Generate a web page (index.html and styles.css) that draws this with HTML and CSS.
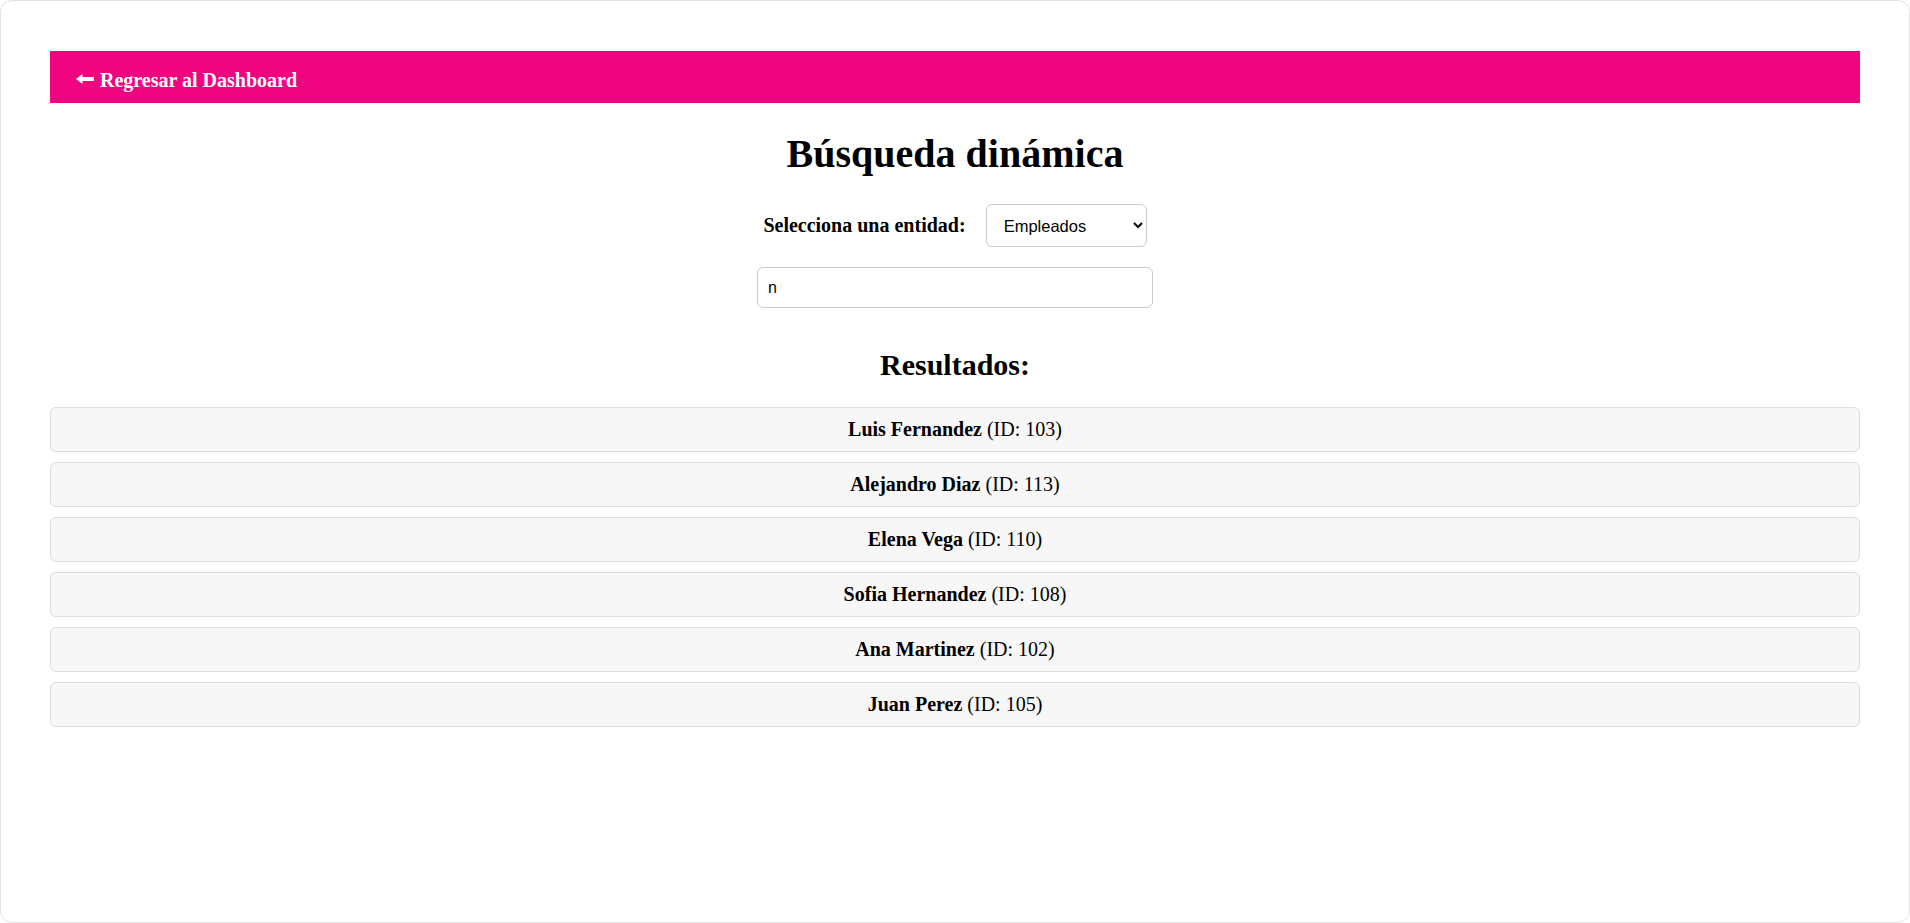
FILE: index.html
```html
<!DOCTYPE html>
<html lang="es">
<head>
<meta charset="utf-8">
<title>Búsqueda dinámica</title>
<link rel="stylesheet" href="styles.css">
</head>
<body>
<div class="page">
  <nav class="topbar">
    <a class="back-link" href="#">
      <svg class="back-icon" width="18" height="10" viewBox="0 0 18 10" aria-hidden="true">
        <polygon points="0,5 6.5,0 6.5,10" fill="#fff"/>
        <rect x="6" y="3" width="12" height="4" fill="#fff"/>
      </svg>
      Regresar al Dashboard
    </a>
  </nav>

  <h1 class="title">Búsqueda dinámica</h1>

  <div class="entity-row">
    <label class="entity-label" for="entity">Selecciona una entidad:</label>
    <select class="entity-select" id="entity">
      <option>Empleados</option>
    </select>
  </div>

  <div class="search-row">
    <input class="search-input" type="text" value="n">
  </div>

  <h2 class="results-title">Resultados:</h2>

  <ul class="results">
    <li class="result"><strong>Luis Fernandez</strong> (ID: 103)</li>
    <li class="result"><strong>Alejandro Diaz</strong> (ID: 113)</li>
    <li class="result"><strong>Elena Vega</strong> (ID: 110)</li>
    <li class="result"><strong>Sofia Hernandez</strong> (ID: 108)</li>
    <li class="result"><strong>Ana Martinez</strong> (ID: 102)</li>
    <li class="result"><strong>Juan Perez</strong> (ID: 105)</li>
  </ul>
</div>
</body>
</html>
```
FILE: styles.css
```css
* {
  box-sizing: border-box;
}

html, body {
  margin: 0;
  padding: 0;
  background: #ffffff;
}

body {
  font-family: "Liberation Serif", "Times New Roman", serif;
  font-size: 20px;
  color: #000;
}

.page {
  min-height: 100vh;
  border: 1px solid #e2e2e2;
  border-radius: 12px;
  padding: 50px 49px 40px;
  background: #fff;
}

.topbar {
  background: #f0047f;
  height: 52px;
  padding: 15px 26px 14px;
}

.back-link {
  color: #fff;
  font-weight: bold;
  text-decoration: none;
  display: inline-flex;
  align-items: center;
  gap: 6px;
  line-height: 23px;
}

.back-icon {
  display: block;
  margin-top: -2px;
}

.title {
  font-size: 40px;
  text-align: center;
  margin: 28px 0 27px;
  line-height: 46px;
}

.entity-row {
  display: flex;
  justify-content: center;
  align-items: center;
  gap: 20px;
}

.entity-label {
  font-weight: bold;
}

.entity-select {
  font-family: "Liberation Sans", Arial, sans-serif;
  font-size: 16.5px;
  color: #000;
  height: 43px;
  width: 161px;
  padding: 0 10px 0 13px;
  border: 1px solid #cccccc;
  border-radius: 6px;
  background: #fff;
}

.search-row {
  display: flex;
  justify-content: center;
  margin-top: 20px;
}

.search-input {
  font-family: "Liberation Sans", Arial, sans-serif;
  font-size: 16px;
  color: #000;
  width: 396px;
  height: 41px;
  padding: 0 10px;
  border: 1px solid #cccccc;
  border-radius: 6px;
  background: #fff;
}

.results-title {
  font-size: 30px;
  text-align: center;
  line-height: 34px;
  margin: 40px 0 25px;
}

.results {
  list-style: none;
  margin: 0;
  padding: 0;
  display: flex;
  flex-direction: column;
  gap: 10px;
}

.result {
  background: #f7f7f7;
  border: 1px solid #dddddd;
  border-radius: 6px;
  padding: 10px;
  line-height: 23px;
  text-align: center;
}
```
